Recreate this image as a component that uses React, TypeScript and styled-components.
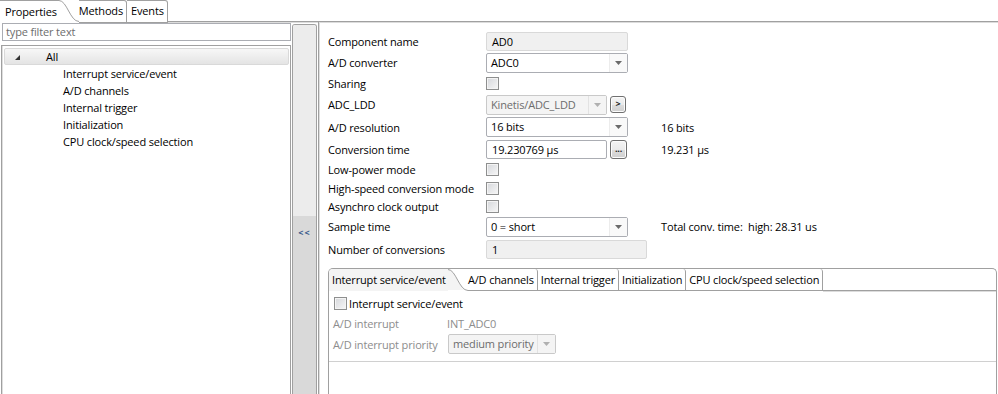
import styled, { createGlobalStyle } from "styled-components";

const LINE = "#a0a0a0";
const DIM = "#8d8d8d";

const GlobalStyle = createGlobalStyle`
  html, body {
    margin: 0;
    padding: 0;
    background: #fff;
  }
  body {
    font-family: "Open Sans", "Noto Sans", sans-serif;
    font-size: 11px;
    letter-spacing: -0.15px;
    color: #000;
  }
`;

interface RowDef {
  label: string;
  h: number;
  control: React.ReactNode;
  value?: string;
}

const treeItems = [
  "Interrupt service/event",
  "A/D channels",
  "Internal trigger",
  "Initialization",
  "CPU clock/speed selection",
];

const pageTabs = ["A/D channels", "Internal trigger", "Initialization", "CPU clock/speed selection"];

const TabCurve: React.FC<{ fill: string }> = ({ fill }) => (
  <CurveSvg width="20" height="22" viewBox="0 0 20 22">
    <path d="M0 0 C 8 0, 11 21, 20 21 L0 21 Z" fill={fill} />
    <path d="M0 0.5 C 8 0.5, 11 21.5, 20 21.5" fill="none" stroke={LINE} />
  </CurveSvg>
);

const Select: React.FC<{ text: string; width: number; disabled?: boolean }> = ({
  text,
  width,
  disabled,
}) => (
  <Combo $w={width} $disabled={disabled}>
    <ComboText>{text}</ComboText>
    <ComboArrow $disabled={disabled}>
      <svg width="7" height="4" viewBox="0 0 7 4">
        <path d="M0 0 H7 L3.5 4 Z" fill={disabled ? "#b0b0b0" : "#6a6a6a"} />
      </svg>
    </ComboArrow>
  </Combo>
);

const App = () => {
  const rows: RowDef[] = [
    { label: "Component name", h: 21, control: <TextBox $w={142} $gray>AD0</TextBox> },
    { label: "A/D converter", h: 21, control: <Select text="ADC0" width={142} /> },
    { label: "Sharing", h: 21, control: <Check /> },
    {
      label: "ADC_LDD",
      h: 21,
      control: (
        <>
          <Select text="Kinetis/ADC_LDD" width={121} disabled />
          <SmallButton $w={16} $h={17}>&gt;</SmallButton>
        </>
      ),
    },
    { label: "A/D resolution", h: 24, control: <Select text="16 bits" width={142} />, value: "16 bits" },
    {
      label: "Conversion time",
      h: 21,
      control: (
        <>
          <TextBox $w={121}>19.230769 µs</TextBox>
          <SmallButton $w={17} $h={19}>...</SmallButton>
        </>
      ),
      value: "19.231 µs",
    },
    { label: "Low-power mode", h: 19, control: <Check /> },
    { label: "High-speed conversion mode", h: 18, control: <Check /> },
    { label: "Asynchro clock output", h: 18, control: <Check /> },
    {
      label: "Sample time",
      h: 23,
      control: <Select text="0 = short" width={142} />,
      value: "Total conv. time:  high: 28.31 us",
    },
    { label: "Number of conversions", h: 22, control: <TextBox $w={161} $gray>1</TextBox> },
  ];

  return (
    <Screen>
      <GlobalStyle />
      <TabStrip>
        <ActiveTab $pad={5} $bordered>
          Properties
        </ActiveTab>
        <TabCurve fill="#fff" />
        <Tab $bordered $padL={0}>Methods</Tab>
        <Tab $bordered $padL={4}>Events</Tab>
        <TabFill />
      </TabStrip>

      <Body>
        <LeftPane>
          <FilterBox>type filter text</FilterBox>
          <TreeBox>
            <TreeRoot>
              <Twisty viewBox="0 0 6 6">
                <path d="M6 0 V6 H0 Z" fill="#333" />
              </Twisty>
              All
            </TreeRoot>
            {treeItems.map((item) => (
              <TreeItem key={item}>{item}</TreeItem>
            ))}
          </TreeBox>
        </LeftPane>

        <Splitter>
          <SplitterTop />
          <SplitterBottom>&lt;&lt;</SplitterBottom>
        </Splitter>

        <RightPane>
          <Form>
            {rows.map((r) => (
              <PropRow key={r.label} $h={r.h}>
                <PropLabel>{r.label}</PropLabel>
                <PropControl>{r.control}</PropControl>
                <PropValue>{r.value}</PropValue>
              </PropRow>
            ))}
          </Form>

          <Folder>
            <TabStrip>
              <ActiveTab $pad={3} $bg="#f4f4f4">
                Interrupt service/event
              </ActiveTab>
              <TabCurve fill="#f4f4f4" />
              {pageTabs.map((t, i) => (
                <Tab key={t} $padL={i === 0 ? 0 : 3}>
                  {t}
                </Tab>
              ))}
              <TabFill />
            </TabStrip>
            <PageBody>
              <PageRow>
                <Check />
                <CheckLabel>Interrupt service/event</CheckLabel>
              </PageRow>
              <PageRow>
                <PageLabel>A/D interrupt</PageLabel>
                <DimText>INT_ADC0</DimText>
              </PageRow>
              <PageRow $h={22}>
                <PageLabel>A/D interrupt priority</PageLabel>
                <Select text="medium priority" width={108} disabled />
              </PageRow>
              <PageRule />
            </PageBody>
          </Folder>
        </RightPane>
      </Body>
    </Screen>
  );
};

export default App;

const Screen = styled.div`
  width: 998px;
  height: 394px;
  display: flex;
  flex-direction: column;
  overflow: hidden;
  background: #fff;
`;

const TabStrip = styled.div`
  display: flex;
  height: 22px;
  flex: none;
  line-height: 21px;
`;

const ActiveTab = styled.div<{ $pad: number; $bg?: string; $bordered?: boolean }>`
  padding: 0 2px 0 ${(p) => p.$pad}px;
  background: ${(p) => p.$bg || "#fff"};
  border-top: ${(p) => (p.$bordered ? `1px solid ${LINE}` : "none")};
  white-space: nowrap;
`;

const CurveSvg = styled.svg`
  flex: none;
  display: block;
`;

const Tab = styled.div<{ $padL: number; $bordered?: boolean }>`
  padding: 0 3px 0 ${(p) => p.$padL}px;
  border-top: ${(p) => (p.$bordered ? `1px solid ${LINE}` : "none")};
  border-right: 1px solid ${LINE};
  border-bottom: 1px solid ${LINE};
  border-top-right-radius: 3px;
  white-space: nowrap;
  height: 21px;
  line-height: ${(p) => (p.$bordered ? "20px" : "21px")};
`;

const TabFill = styled.div`
  flex: 1;
  border-bottom: 1px solid ${LINE};
  box-shadow: 0 1px 0 #dcdcdc;
`;

const Body = styled.div`
  flex: 1;
  display: flex;
  min-height: 0;
`;

const LeftPane = styled.div`
  width: 290px;
  flex: none;
  display: flex;
  flex-direction: column;
  padding: 1px 0 0 1px;
`;

const FilterBox = styled.div`
  height: 16px;
  margin-left: 1px;
  border: 1px solid #abadb3;
  padding-left: 3px;
  line-height: 16px;
  color: #6d6d6d;
`;

const TreeBox = styled.div`
  flex: 1;
  margin-top: 4px;
  border: 1px solid ${LINE};
  border-bottom: none;
  box-shadow: inset 1px 0 0 #dedede;
  padding: 2px 1px 0 2px;
`;

const TreeRoot = styled.div`
  height: 15px;
  display: flex;
  align-items: center;
  padding-left: 41px;
  position: relative;
  border: 1px solid #d9d9d9;
  border-radius: 2px;
  background: linear-gradient(#f7f7f7, #e4e4e4);
`;

const Twisty = styled.svg`
  position: absolute;
  left: 10px;
  top: 6px;
  width: 5px;
  height: 5px;
`;

const TreeItem = styled.div`
  height: 17px;
  line-height: 17px;
  padding-left: 59px;
`;

const Splitter = styled.div`
  width: 23px;
  flex: none;
  margin: 2px 1px 0 1px;
  border: 1px solid ${LINE};
  border-bottom: none;
  border-radius: 3px 3px 0 0;
  display: flex;
  flex-direction: column;
  overflow: hidden;
`;

const SplitterTop = styled.div`
  height: 191px;
  background: #ececec;
`;

const SplitterBottom = styled.div`
  flex: 1;
  background: #d9d9d9;
  text-align: center;
  font-size: 9px;
  font-weight: bold;
  color: #3a5a8c;
  letter-spacing: 1px;
  padding-top: 10px;
`;

const RightPane = styled.div`
  flex: 1;
  display: flex;
  flex-direction: column;
  border-left: 1px solid ${LINE};
  box-shadow: inset 1px 0 0 #dedede;
  padding: 9px 1px 0 9px;
  min-width: 0;
`;

const Form = styled.div`
  display: flex;
  flex-direction: column;
`;

const PropRow = styled.div<{ $h: number }>`
  height: ${(p) => p.$h}px;
  display: grid;
  grid-template-columns: 157px 176px auto;
  align-items: center;
`;

const PropLabel = styled.div`
  white-space: nowrap;
`;

const PropControl = styled.div`
  display: flex;
  align-items: center;
  gap: 3px;
`;

const PropValue = styled.div`
  white-space: pre;
`;

const TextBox = styled.div<{ $w: number; $gray?: boolean }>`
  width: ${(p) => p.$w}px;
  height: 19px;
  box-sizing: border-box;
  border: 1px solid ${(p) => (p.$gray ? "#d9d9d9" : "#abadb3")};
  border-radius: 2px;
  background: ${(p) => (p.$gray ? "#f0f0f0" : "#fff")};
  padding-left: 5px;
  line-height: 17px;
  margin-left: 1px;
`;

const Combo = styled.div<{ $w: number; $disabled?: boolean }>`
  width: ${(p) => p.$w}px;
  height: 20px;
  box-sizing: border-box;
  display: flex;
  border: 1px solid ${(p) => (p.$disabled ? "#c9c9c9" : "#abadb3")};
  border-radius: 2px;
  background: ${(p) => (p.$disabled ? "#f4f4f4" : "#fff")};
  color: ${(p) => (p.$disabled ? "#6d6d6d" : "#000")};
  margin-left: 1px;
`;

const ComboText = styled.div`
  flex: 1;
  padding-left: 4px;
  line-height: 18px;
  white-space: nowrap;
  overflow: hidden;
`;

const ComboArrow = styled.div<{ $disabled?: boolean }>`
  width: 17px;
  flex: none;
  display: flex;
  align-items: center;
  justify-content: center;
  border-left: 1px solid ${(p) => (p.$disabled ? "#e2e2e2" : "#ececec")};
  background: ${(p) => (p.$disabled ? "#f4f4f4" : "#f9f9f9")};
`;

const SmallButton = styled.div<{ $w: number; $h: number }>`
  width: ${(p) => p.$w}px;
  height: ${(p) => p.$h}px;
  box-sizing: border-box;
  border: 1px solid #707070;
  border-radius: 3px;
  background: linear-gradient(#f4f4f4 0%, #ebebeb 50%, #dddddd 51%, #cfcfcf 100%);
  box-shadow: inset 0 0 0 1px #fcfcfc;
  font-size: 9px;
  font-weight: bold;
  text-align: center;
  line-height: ${(p) => p.$h - 4}px;
  color: #222;
`;

const Check = styled.div`
  width: 13px;
  height: 13px;
  box-sizing: border-box;
  border: 1px solid #8e8f8f;
  background: linear-gradient(135deg, #d5d7db 0%, #f7f7f7 100%);
  box-shadow: inset 0 0 0 1px #f4f4f4;
  margin-left: 1px;
  flex: none;
`;

const Folder = styled.div`
  flex: 1;
  margin-top: 8px;
  border: 1px solid ${LINE};
  border-bottom: none;
  border-radius: 5px 5px 0 0;
  display: flex;
  flex-direction: column;
  overflow: hidden;
`;

const PageBody = styled.div`
  padding: 2px 0 0 4px;
  display: flex;
  flex-direction: column;
`;

const PageRow = styled.div<{ $h?: number }>`
  height: ${(p) => p.$h || 20}px;
  display: flex;
  align-items: center;
`;

const CheckLabel = styled.span`
  margin-left: 2px;
`;

const PageLabel = styled.div`
  width: 114px;
  color: ${DIM};
  white-space: nowrap;
`;

const DimText = styled.div`
  color: ${DIM};
`;

const PageRule = styled.div`
  margin: 6px 0 0 -4px;
  border-top: 1px solid #d0d0d0;
`;
